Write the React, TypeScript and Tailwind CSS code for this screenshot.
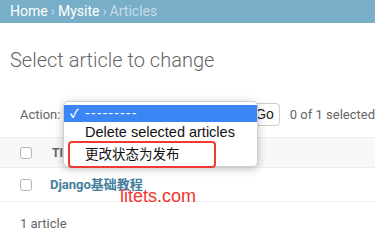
import React from 'react';

const Checkbox = () => (
  <span className="inline-block w-[12px] h-[12px] rounded-[3px] border border-[#b5b5b5] bg-white" />
);

const ActionMenu = () => (
  <div className="absolute left-[63px] top-[101px] w-[195px] h-[66px] rounded-[5px] bg-white border border-[#d0d0d0] shadow-[0_2px_8px_rgba(0,0,0,0.25)] pt-[3px] font-['Liberation_Sans','Noto_Sans_CJK_SC',sans-serif] text-[14.5px] text-[#111]">
    <div className="flex items-center h-[17px] bg-[#3a86f7] text-white">
      <span className="w-[21px] pl-[6px] text-[12px] font-bold">✓</span>
      <span className="tracking-[1px]">---------</span>
    </div>
    <div className="flex items-center h-[21px] pl-[21px]">Delete selected articles</div>
    <div className="relative flex items-center h-[20px] pl-[21px]">
      <span className="font-['Noto_Sans_CJK_SC',sans-serif] text-[13.5px]">更改状态为发布</span>
      <div className="absolute left-[4px] top-[-2px] w-[148px] h-[27px] rounded-[4px] border-2 border-[#ee3a33]" />
    </div>
  </div>
);

export default function App() {
  return (
    <div className="relative w-[375px] h-[241px] overflow-hidden bg-white font-['Roboto',sans-serif] text-[#333]">
      <div className="h-[23px] bg-[#79aec8] pl-[10px] flex items-center text-[14px] text-white">
        <span>Home</span>
        <span className="mx-[3px] text-[#c4dce8]">›</span>
        <span>Mysite</span>
        <span className="mx-[3px] text-[#c4dce8]">›</span>
        <span className="text-[#c4dce8]">Articles</span>
      </div>
      <h1 className="pl-[10px] mt-[25px] text-[20px] font-light text-[#666] leading-[24px]">
        Select article to change
      </h1>
      <div className="flex items-center mt-[31px] pl-[20px] h-[23px] text-[13px] text-[#666]">
        <span>Action:</span>
        <span className="w-[198px]" />
        <button className="h-[23px] px-[5px] rounded-[4px] border border-[#ccc] bg-white text-[#222] font-['Liberation_Sans',sans-serif] text-[14px]">
          Go
        </button>
        <span className="ml-[10px] whitespace-nowrap">0 of 1 selected</span>
      </div>
      <div className="mt-[11px] h-[31px] bg-[#f8f8f8] border-t border-b border-[#eee] flex items-center pl-[20px]">
        <Checkbox />
        <span className="ml-[20px] text-[12px] font-bold text-[#666]">TITLE</span>
      </div>
      <div className="h-[34px] border-b border-[#eee] flex items-center pl-[20px]">
        <Checkbox />
        <span className="ml-[18px] text-[13px] font-bold text-[#447e9b] font-['Roboto','Noto_Sans_CJK_SC',sans-serif]">
          Django基础教程
        </span>
      </div>
      <div className="pl-[20px] pt-[12px] text-[13px] text-[#666]">1 article</div>
      <ActionMenu />
      <div className="absolute left-[120px] top-[186px] text-[18px] text-[#f4332c] font-['Liberation_Sans',sans-serif] leading-[20px]">
        litets.com
      </div>
    </div>
  );
}
